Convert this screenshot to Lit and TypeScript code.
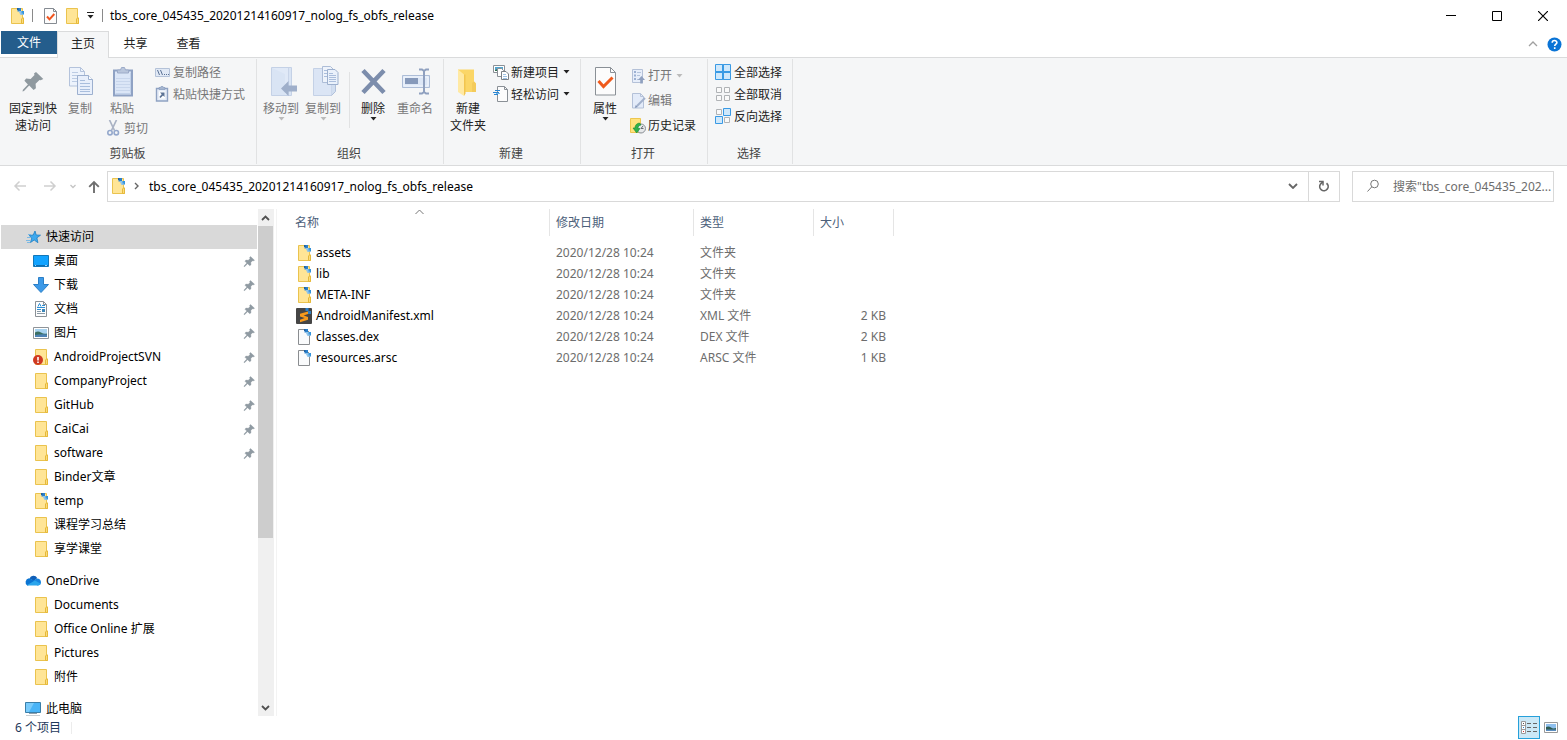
import { LitElement, html, svg, css, nothing } from "lit";
import { customElement, state } from "lit/decorators.js";
import { classMap } from "lit/directives/class-map.js";

const box = (w: number, h: number, body: unknown) =>
  html`<svg width=${w} height=${h} viewBox="0 0 ${w} ${h}" aria-hidden="true">${body}</svg>`;

/* ---------- shared shapes ---------- */
const folderShape = svg`
  <path d="M2.500 .5h11v9.500h1v5.500h-12z" fill="#ffe596" stroke="#eac34e"/>
  <path d="M12.500 15.500v-4.500l1-1h1v5.500z" fill="#fbdc7c" stroke="#e6b93a"/>`;
const zipMark = svg`
  <path d="M8.500 0h3.500v3.500h-3.500z" fill="#2a7fc9"/><path d="M12 3h3v3.500h-3z" fill="#2f8fd8"/>
  <path d="M9.500 3h3l2 3.500-3 .5z" fill="#8fc4ea"/><path d="M8 0h1.500v2h-1.500z" fill="#1f5f9f"/>
  <path d="M12.500 3.500h2v2h-2z" fill="#3d9ae0"/>`;
const pageShape = svg`<path d="M2.500 .5h8l3 3v12h-11z" fill="#fafbfc" stroke="#8a8d90"/>`;

/* ---------- 16px icons ---------- */
const icons = {
  folder: box(16, 16, folderShape),
  zipFolder: box(16, 16, svg`${folderShape}${zipMark}`),
  file: box(16, 16, svg`${pageShape}${zipMark}`),
  sublime: box(16, 16, svg`
    <rect width="16" height="16" rx="1" fill="#454545"/>
    <path d="M12 3.400v2.600L7.600 7.400 12 8.900v2.800L4 14.200v-2.500l4.700-1.600L4 8.500V5.800z" fill="#f79a1c"/>
    <path d="M9.500 0h3v3h-3z" fill="#2a7fc9"/><path d="M12 3h3v3h-3z" fill="#2f7fc0"/>`),
  checkPage: box(13, 16, svg`
    <path d="M.5 .5h9l3 3v12h-12z" fill="#fcfcfc" stroke="#858b92"/><path d="M9.500 .5v3h3" fill="none" stroke="#858b92"/>
    <path d="M3 8.500l2.500 2.800L10.300 6" fill="none" stroke="#f0541e" stroke-width="2"/>`),
  path: box(16, 16, svg`
    <path d="M.5 4.500h14v8H.5z" fill="#e1e9f5" stroke="#b4c2d8"/>
    <path d="M2.500 6l2 5M5.500 6l2 5" stroke="#5b7295" fill="none"/>
    <path d="M9 10.500h1M11 10.500h1M13 10.500h1" stroke="#5b7295" fill="none"/>`),
  shortcut: box(16, 16, svg`
    <path d="M1.500 2.500h11v12.500h-11z" fill="#e6edf8" stroke="#8fa2c2" stroke-width="1.400"/>
    <path d="M4 3.500V1.500h1.500L6 .5h2l.5 1H10v2z" fill="#a5b5cf" stroke="#8296b8" stroke-width=".6"/>
    <path d="M4 5.500h6v7H4z" fill="#fff"/>
    <path d="M5 6.500h4.500v4.500L8 9.500 5.500 12 4.300 11 6.700 8.200z" fill="#5b7295"/>`),
  cut: box(13, 16, svg`
    <path d="M2.500 0l5 10.500M9.500 0l-5 10.500" fill="none" stroke="#a9b2c4" stroke-width="1.700"/>
    <circle cx="3" cy="12.700" r="2.200" fill="none" stroke="#94a8cc" stroke-width="1.600"/>
    <circle cx="9.300" cy="12.700" r="2.200" fill="none" stroke="#94a8cc" stroke-width="1.600"/>`),
  newItem: box(16, 16, svg`
    <path d="M.5 1.500h11v7H.5z" fill="#fff" stroke="#8a9097"/><path d="M2 3h8v4H2z" fill="#53a5cf"/><path d="M2 6l4-1.500L10 7H2z" fill="#35704f"/>
    <path d="M4.500 4.500h4l2 2v6h-6z" fill="#fff" stroke="#8a9096"/>
    <path d="M8.500 7.500h4.500l2.500 2.500v5.500h-7z" fill="#fff" stroke="#7a8087"/>
    <path d="M10 10.500h3M10 12.500h4M10 14.500h4" stroke="#9fc3e6"/>`),
  easy: box(16, 16, svg`
    <path d="M4.500 .5h7l3 3v12h-10z" fill="#fcfcfc" stroke="#8a9096"/><path d="M11.500 .5v3h3" fill="none" stroke="#8a9096"/>
    <path d="M2 4.500h5M0 6.500h6M1 8.500h4" stroke="#2a86d1"/><path d="M3 7.500h4" stroke="#74b3e6"/>`),
  open: box(16, 16, svg`
    <path d="M2.500 1.500h10v13h-10z" fill="#e7eefa" stroke="#b4c1d8"/>
    <path d="M4 3h2v2H4zM4 6.500h2v2H4zM4 10h2v2H4z" fill="#9cb0d2"/><path d="M7 4.500h4M7 7.500h3M7 11.500h2" stroke="#b4c4dc"/>
    <path d="M11.500 8l3.500 4h-2.200v3.500h-2.600V12H8z" fill="#8fa0bf"/>`),
  edit: box(16, 16, svg`
    <path d="M2.500 .5h8l3 3v11.500h-11z" fill="#e3ebf9" stroke="#b4c1d8"/><path d="M10.500 .5v3h3" fill="none" stroke="#b4c1d8"/>
    <path d="M15 5L7 13" stroke="#a2b1cc" stroke-width="2"/><path d="M4.800 15l1-3 2 2z" fill="#8396b8"/>`),
  history: box(16, 16, svg`
    <path d="M.5 .5h10v14H.5z" fill="#ffe27d" stroke="#edc64f"/>
    <circle cx="11" cy="10.500" r="4.500" fill="#e6e8ea" stroke="#888e94"/>
    <path d="M11 10.500l2-2.500M11 10.500h2.500" fill="none" stroke="#666c72"/>
    <path d="M9.500 5C6 5.500 5 8 5 10H3l3.700 5L10 10.500H8C8 8.500 8.800 7.500 11 7z" fill="#31b14a" stroke="#178a32" stroke-width=".6"/>`),
  selectAll: box(16, 16, svg`<path d="M.5 .5h7v7h-7zM8.500 .5h7v7h-7zM.5 8.500h7v7h-7zM8.500 8.500h7v7h-7z" fill="#cfe8fb" stroke="#3a9ae4"/><path d="M0 8h16M8 0v16" stroke="#3a9ae4" stroke-width="1.500"/>`),
  selectNone: box(16, 16, svg`<path d="M1.500 1.500h5v5h-5zM9.500 1.500h5v5h-5zM1.500 9.500h5v5h-5zM9.500 9.500h5v5h-5z" fill="#fafafa" stroke="#b0b3b6"/>`),
  invert: box(16, 16, svg`
    <path d="M1.500 1.500h5v5h-5zM9.500 9.500h5v5h-5z" fill="#fafafa" stroke="#b0b3b6"/>
    <path d="M8.500 .5h7v7h-7zM.5 8.500h7v7h-7z" fill="#cfe8fb" stroke="#3a9ae4"/>`),
  star: box(16, 16, svg`
    <path d="M10 2l1.200 4 4.300.2-3.600 2.600 1 4.900-3.700-2.700-3.700 2.500 1.300-4.500L4.200 6.500l4-.5z" fill="#3ea9ee" stroke="#1d7fc4" stroke-width=".8"/>
    <path d="M3 5.500h3M2 8.500h4M1 11.500h4M2 13.500h3" stroke="#7bb9e4"/>`),
  desktop: box(16, 16, svg`
    <path d="M.5 2.500h15v11H.5z" fill="#12a3ff" stroke="#1377b8"/><path d="M1 12.500h14" stroke="#0d6db0"/><path d="M2 12.500h1M12 12.500h2" stroke="#9bd6ff"/>`),
  download: box(16, 16, svg`<path d="M5.500 .5h5v7h5L8 15.500.5 7.500h5z" fill="#3d9ae8" stroke="#2b7fc7"/>`),
  document: box(16, 16, svg`
    <path d="M2.500 .5h8l3 3v12h-11z" fill="#fdfdfd" stroke="#8a9096"/><path d="M10.500 .5v3h3" fill="none" stroke="#8a9096"/>
    <path d="M5 5.500l1.500-3 1.500 3" fill="none" stroke="#2c8fd6"/>
    <path d="M4 6.500h8M9 4.500h3M4 8.500h4" stroke="#2c8fd6"/><path d="M4 10.500h4M4 12.500h8" stroke="#8a9aa6"/><path d="M9 8h3v3H9z" fill="#3c86b8"/>`),
  picture: box(16, 16, svg`
    <path d="M.5 2.500h15v11H.5z" fill="#fff" stroke="#8f9499"/><path d="M2 4h12v8H2z" fill="#a8d3f0"/>
    <path d="M2 7.500q3-2 6 0t6 1V12H2z" fill="#3b6f62"/><path d="M2 10q6-1 12-.5V12H2z" fill="#4d82b5"/>`),
  svnFolder: box(16, 16, svg`${folderShape}
    <circle cx="5" cy="11" r="5" fill="#cf3a22"/><path d="M5 8v3.500M5 12.500v1.500" stroke="#fff" stroke-width="1.600"/>`),
  cloud: box(16, 16, svg`
    <path d="M4.500 5.500A4.300 4.300 0 0 1 12.200 5L9 8z" fill="#0f5fb8"/><path d="M4 5.300a4 4 0 0 0-1.500 7.400L11 8z" fill="#0b74d2"/>
    <path d="M12 5.600c2.300 0 4 1.500 4 3.600 0 2.100-1.600 3.300-3.500 3.300L7 9.500l3.300-3c.5-.5 1.100-.8 1.700-.9z" fill="#1683de"/>
    <path d="M3.500 12.500h9.200c1.500 0 2.500-.7 3-1.700L10 7.600l-7.800 4.300c.4.400.8.600 1.300.6z" fill="#2aa5ec"/>`),
  computer: box(16, 16, svg`
    <path d="M.5 1.500h15v10H.5z" fill="#49b4f7" stroke="#3a7ea8"/><path d="M1 2h8L4 11H1z" fill="#79cbfb"/>
    <path d="M7 12h2v1H7z" fill="#94a2ad"/><path d="M4 12.500h8" stroke="#8fa0ad"/><path d="M1 14.500h14" stroke="#c9ced2"/>`),
  pin: box(12, 13, svg`<path d="M7.500 1.500 11.500 5.300l-1.400.6-.6-.2-1.700 1.700.2 2.400-1.300.9-2.100-2L1.800 11.400l-.8.300.2-.9 2.600-2.700-1.800-1.800.9-1.200 2.400.2 1.700-1.700-.5-.8z" fill="#8f9aa2" stroke="#8f9aa2" stroke-width=".4"/>`),
  search: box(14, 14, svg`<circle cx="8.500" cy="5" r="3.800" fill="none" stroke="#777"/><path d="M5.800 7.800L1.500 12.500" stroke="#777"/>`),
};

/* ---------- large ribbon icons ---------- */
const large = {
  pin: box(32, 32, svg`<path d="M19 6l7.300 7-2.600 1.200-1.200-.3-3.900 3.900.3 4.400-2.300 1.700-4.400-4.500-5.200 5.600-1.500.5.400-1.700 5-5.300-3.500-3.800 1.700-2.200 4.500.4 3.900-3.900-.5-1.500z" fill="#8f999f"/>`),
  copy: box(32, 32, svg`
    <path d="M5.500 1.500h11l4 4v14.500h-15z" fill="#edf3fc" stroke="#b4c3dc"/><path d="M16.500 1.500v4h4" fill="none" stroke="#b4c3dc"/>
    <path d="M8 6.500h6M8 9.500h10M8 12.500h10M8 15.500h10" stroke="#bccce4"/>
    <path d="M13.500 9.500h11l4 4v15h-15z" fill="#e8effb" stroke="#9db0cf"/><path d="M24.500 9.500v4h4" fill="#fff" stroke="#9db0cf"/>
    <path d="M16 14.500h5M16 17.500h10M16 20.500h10M16 23.500h10M16 25.500h10" stroke="#a9bedd"/>`),
  paste: box(32, 32, svg`
    <path d="M8 4.500h18v25H8z" fill="#dbe6f7" stroke="#8fa2c4" stroke-width="2"/><path d="M9.500 27.500h15v-21" fill="none" stroke="#c2d2ea"/>
    <path d="M11.500 7V4h3l1-2.500h3l1 2.500h3v3z" fill="#b9c6dc" stroke="#9cabc8"/>
    <path d="M10 12.500h14M10 15.500h14M10 18.500h14M10 21.500h14M10 24.500h14" stroke="#c8d6ec"/>`),
  moveTo: box(32, 32, svg`
    <path d="M6.500 1.500h20v28h-20z" fill="#d9e4f4" stroke="#c4d1e6"/><path d="M7 2h17v23l-4 4V8z" fill="#e0e9f7"/><path d="M23.500 2v27" stroke="#c8d4e8"/>
    <path d="M16 22.500l7.500-7.500v4.500H32v6h-8.500V30z" fill="#9fafca"/>`),
  copyTo: box(32, 32, svg`
    <path d="M6.500 2.500h18v27h-18z" fill="#dbe5f5" stroke="#c4d1e6"/><path d="M24.500 17.500h4v8l-4 4" fill="#d1def0" stroke="#b1c0da"/>
    <path d="M15.500 .5h8l3 3v13h-11z" fill="#eef3fb" stroke="#adbdd7"/>
    <path d="M20.500 3.500h7.500l3 3v12h-10.500z" fill="#eaf1fb" stroke="#9db0ce"/>
    <path d="M17 4.500h3M17 7.500h3M17 10.500h3M22 7.500h4M22 9.500h7M22 11.500h7M22 13.500h7M22 15.500h7" stroke="#abbedc"/>`),
  remove: box(32, 32, svg`<path d="M6 4.500l21 22M27 4.500l-21 22" fill="none" stroke="#7c8dac" stroke-width="4.600"/>`),
  rename: box(32, 32, svg`
    <path d="M3.500 9.500h27v12h-27z" fill="#dde7f6" stroke="#adbdd7" /><path d="M5 11h24v9H5z" fill="none" stroke="#f3f7fd"/>
    <path d="M6 12h13v6H6z" fill="#8699ba"/>
    <path d="M20 3.500h3l2 1.500v21l-2 1.500h-3M30 3.500h-3l-2 1.500M30 27.500h-3l-2-1.500" fill="none" stroke="#8fa0bf" stroke-width="2"/>`),
  newFolder: box(32, 32, svg`
    <path d="M6 3.500h16v12l2 2V26H6z" fill="#fbd667"/><path d="M6 3.500l6 5v21.500l-6-4z" fill="#ffe9a3"/>
    <path d="M12 8.500h1.500v19L12 30z" fill="#f2c550"/><path d="M20 17l2-1.500 2 2V26h-4z" fill="#f4cb5b"/>`),
  properties: box(32, 32, svg`
    <path d="M6.500 1.500h15l5 5v22.500h-20z" fill="#fcfcfc" stroke="#8a9096"/><path d="M21.500 1.500v5h5" fill="none" stroke="#8a9096"/>
    <path d="M9.500 15l5 5.500L23.500 11.500" fill="none" stroke="#ef5a1c" stroke-width="3"/>`),
};

const down = html`<svg class="caret" width="7" height="4" viewBox="0 0 7 4" aria-hidden="true"><path d="M0.500 0h6L3.500 3.500z" fill="currentColor"/></svg>`;

type Icon = keyof typeof icons;
interface NavItem { label: string; icon: Icon; pinned?: boolean; }
interface NavGroup { label: string; icon: Icon; items: NavItem[]; }

const NAV: NavGroup[] = [
  { label: "快速访问", icon: "star", items: [
    { label: "桌面", icon: "desktop", pinned: true },
    { label: "下载", icon: "download", pinned: true },
    { label: "文档", icon: "document", pinned: true },
    { label: "图片", icon: "picture", pinned: true },
    { label: "AndroidProjectSVN", icon: "svnFolder", pinned: true },
    { label: "CompanyProject", icon: "folder", pinned: true },
    { label: "GitHub", icon: "folder", pinned: true },
    { label: "CaiCai", icon: "folder", pinned: true },
    { label: "software", icon: "folder", pinned: true },
    { label: "Binder文章", icon: "folder" },
    { label: "temp", icon: "zipFolder" },
    { label: "课程学习总结", icon: "folder" },
    { label: "享学课堂", icon: "folder" },
  ] },
  { label: "OneDrive", icon: "cloud", items: [
    { label: "Documents", icon: "folder" },
    { label: "Office Online 扩展", icon: "folder" },
    { label: "Pictures", icon: "folder" },
    { label: "附件", icon: "folder" },
  ] },
  { label: "此电脑", icon: "computer", items: [] },
];

const FILES: { name: string; icon: Icon; type: string; size: string }[] = [
  { name: "assets", icon: "zipFolder", type: "文件夹", size: "" },
  { name: "lib", icon: "zipFolder", type: "文件夹", size: "" },
  { name: "META-INF", icon: "zipFolder", type: "文件夹", size: "" },
  { name: "AndroidManifest.xml", icon: "sublime", type: "XML 文件", size: "2 KB" },
  { name: "classes.dex", icon: "file", type: "DEX 文件", size: "2 KB" },
  { name: "resources.arsc", icon: "file", type: "ARSC 文件", size: "1 KB" },
];

const TITLE = "tbs_core_045435_20201214160917_nolog_fs_obfs_release";

@customElement("app-root")
export class AppRoot extends LitElement {
  @state() private selected = "快速访问";

  static styles = css`
    :host {
      display: flex; flex-direction: column; height: 100vh; overflow: hidden;
      background: #fff; color: #000;
      font: 12px/17px "Noto Sans", "Noto Sans CJK SC", sans-serif;
    }
    * { box-sizing: border-box; }
    button, input { font: inherit; color: inherit; border: 0; background: none; padding: 0; margin: 0; }
    svg { display: block; flex: none; }
    button { white-space: nowrap; }

    .titlebar { display: flex; align-items: center; height: 31px; padding: 0 1px 0 9px; flex: none; }
    .titlebar .sep { width: 1px; height: 13px; background: #8a8a8a; }
    .quick { display: flex; align-items: center; }
    .quick .check { margin: 0 7px 0 11px; }
    .quick .caret-btn { margin: 0 8px 0 7px; }
    .quick .sep.first { margin-left: 7px; }
    .title { margin-left: 7px; flex: 1; }
    .win { width: 46px; height: 31px; display: grid; place-items: center; }

    .tabs { display: flex; height: 27px; padding-left: 1px; flex: none; border-bottom: 1px solid #dadbdc; }
    .tab { width: 53px; height: 24px; text-align: center; color: #222; }
    .tab.file { width: 56px; height: 23px; background: #245d8c; color: #fff; }
    .tab.active { width: 52px; height: 27px; padding-bottom: 4px; background: #f5f6f7; border: 1px solid #dadbdc; border-bottom: 0; }
    .tools { margin-left: auto; display: flex; align-items: center; gap: 9px; padding-right: 5px; }

    .ribbon { display: flex; flex: none; height: 108px; padding-left: 1px; background: #f5f6f7; border-bottom: 1px solid #dadbdc; color: #222; }
    .group { display: flex; flex-direction: column; padding: 0 3px; border-right: 1px solid #e1e2e3; margin: 1px 0; }
    .group .body { display: flex; flex: 1; }
    .group .name { padding-right: 2px; text-align: center; color: #444; line-height: 20px; }
    .clip { width: 256px; } .org { width: 187px; } .new { width: 137px; } .opn { width: 127px; } .sel { width: 85px; }
    .big { display: flex; flex-direction: column; align-items: center; align-self: flex-start; width: 42px; padding-top: 7px; }
    .big.wide { width: 48px; margin: 0 2px 0 5px; }
    .big .label { margin-top: 2px; }
    .dim { color: #777; }
    .dim .caret { color: #bbb; }
    .stack { display: flex; flex-direction: column; align-items: flex-start; padding: 2px 0 0 4px; }
    .small { display: flex; align-items: center; gap: 2px; height: 22px; }
    .small .caret { margin-left: 2px; }
    .clip .stack { padding-left: 7px; }
    .opn .stack { padding-top: 4px; }
    .opn .small { height: 25px; }
    .sel .small { gap: 3px; }
    .paste .small { gap: 4px; padding-left: 6px; }
    .vsep { width: 1px; height: 56px; margin: 13px 2px 0 5px; background: #e1e2e3; }

    .address { display: flex; align-items: center; height: 42px; padding: 0 13px 2px; flex: none; }
    .address .nav { display: flex; align-items: center; width: 94px; }
    .address .nav button + button { margin-left: 16px; }
    .address .nav button + .recent { margin-left: 13px; }
    .address .nav .recent + button { margin-left: 12px; }
    .crumbs { display: flex; flex: 1; height: 31px; border: 1px solid #d9d9d9; align-items: center; }
    .crumbs .crumb-icon { padding: 0 8px 0 2px; }
    .crumbs .crumb { margin-left: 10px; flex: 1; text-align: left; }
    .crumbs .drop { width: 30px; height: 29px; display: grid; place-items: center; }
    .crumbs .refresh { width: 31px; height: 29px; display: grid; place-items: center; border-left: 1px solid #d9d9d9; }
    .search { display: flex; align-items: center; width: 202px; height: 31px; margin-left: 12px; padding-left: 13px; border: 1px solid #d9d9d9; color: #6d6d6d; }
    .search input { flex: 1; min-width: 0; margin-left: 13px; outline: 0; }
    .search input::placeholder { color: #6d6d6d; opacity: 1; }

    .main { display: flex; flex: 1; min-height: 0; padding-top: 1px; }
    .tree { width: 257px; padding: 16px 0 0 1px; overflow: hidden; flex: none; }
    .tree ul { list-style: none; margin: 0; padding: 0; }
    .branch { margin-bottom: 8px; }
    .row { display: flex; align-items: center; width: 100%; height: 24px; padding: 0 2px 0 24px; text-align: left; }
    .row.child { padding-left: 32px; }
    .row.on { background: #d9d9d9; }
    .row .text { margin-left: 5px; padding-bottom: 2px; flex: 1; }
    .bar { display: flex; flex-direction: column; width: 16px; margin-left: 1px; background: #f0f0f0; flex: none; }
    .bar button { width: 15px; height: 17px; display: grid; place-items: center; }
    .thumb { height: 66%; width: 15px; background: #cdcdcd; }
    .bar .rest { flex: 1; }
    .pane { flex: 1; margin-left: 2px; border-left: 1px solid #f3f3f3; min-width: 0; }

    table { border-collapse: collapse; table-layout: fixed; width: 617px; }
    .c-name { width: 273px; } .c-date { width: 144px; } .c-type { width: 120px; } .c-size { width: 80px; }
    th { position: relative; padding: 0 0 6px; font-weight: 400; text-align: left; color: #4c607a; }
    th .cell { height: 27px; padding-left: 6px; line-height: 27px; border-right: 1px solid #e5e5e5; }
    th:first-child .cell { padding-left: 18px; }
    th svg { position: absolute; top: 0; left: 138px; }
    td { height: 21px; padding: 0 8px 0 6px; color: #6d6d6d; white-space: nowrap; }
    td:first-child { padding-left: 19px; color: #000; }
    td:last-child { text-align: right; }
    .entry { display: flex; align-items: center; gap: 4px; }

    .status { display: flex; align-items: center; height: 24px; padding: 0 5px 0 15px; flex: none; color: #1e395b; }
    .status .count { padding-right: 10px; border-right: 1px solid #ececec; line-height: 12px; }
    .views { display: flex; align-self: flex-start; margin-left: auto; }
    .views button { width: 22px; height: 23px; display: grid; place-items: center; }
    .views .on { border: 1px solid #26a0da; background: #cbe8f6; }
  `;

  private small(label: string, icon: Icon, dim = false, caret = false) {
    return html`<button class=${classMap({ small: true, dim })}>
      ${icons[icon]}<span>${label}</span>${caret ? down : nothing}
    </button>`;
  }

  private big(lines: string[], icon: keyof typeof large, o: { dim?: boolean; caret?: boolean; wide?: boolean } = {}) {
    return html`<button class=${classMap({ big: true, dim: !!o.dim, wide: !!o.wide })}>
      ${large[icon]}<span class="label">${lines[0]}</span>
      ${lines[1] ? html`<span>${lines[1]}</span>` : nothing}${o.caret ? down : nothing}
    </button>`;
  }

  private row(item: NavItem, child: boolean) {
    return html`<button class=${classMap({ row: true, child, on: this.selected === item.label })}
      @click=${() => (this.selected = item.label)}>
      ${icons[item.icon]}<span class="text">${item.label}</span>${item.pinned ? icons.pin : nothing}
    </button>`;
  }

  render() {
    return html`
      <header class="titlebar">
        <div class="quick">
          ${icons.zipFolder}<span class="sep first"></span>
          <button class="check" aria-label="属性">${icons.checkPage}</button>
          <button aria-label="新建文件夹">${icons.folder}</button>
          <button class="caret-btn" aria-label="自定义快速访问工具栏">
            ${box(7, 7, svg`<path d="M0 .5h7" stroke="#222"/><path d="M.5 3h6L3.500 6.500z" fill="#222"/>`)}
          </button>
          <span class="sep"></span>
        </div>
        <span class="title">${TITLE}</span>
        <button class="win" aria-label="最小化">${box(10, 10, svg`<path d="M0 4.500h10" stroke="#000"/>`)}</button>
        <button class="win" aria-label="最大化">${box(10, 10, svg`<path d="M.5 .5h9v9h-9z" fill="none" stroke="#000"/>`)}</button>
        <button class="win" aria-label="关闭">${box(10, 10, svg`<path d="M0 0l10 10M10 0L0 10" stroke="#000" stroke-width="1.200"/>`)}</button>
      </header>

      <nav class="tabs">
        <button class="tab file">文件</button>
        <button class="tab active">主页</button>
        <button class="tab">共享</button>
        <button class="tab">查看</button>
        <div class="tools">
          <button aria-label="最小化功能区">${box(10, 6, svg`<path d="M1 5l4-4 4 4" fill="none" stroke="#a0a0a0" stroke-width="1.300"/>`)}</button>
          <button aria-label="帮助">${box(15, 15, svg`<circle cx="7.500" cy="7.500" r="7" fill="#0a74d6"/>
            <path d="M5.200 5.800c0-3 4.700-2.900 4.700-.2 0 1.600-2.200 1.700-2.200 3.500M7.700 10.300v1.800" fill="none" stroke="#fff" stroke-width="1.600"/>`)}</button>
        </div>
      </nav>

      <section class="ribbon">
        <div class="group clip">
          <div class="body">
            ${this.big(["固定到快", "速访问"], "pin", { wide: true })}
            ${this.big(["复制"], "copy", { dim: true })}
            <div class="paste">
              ${this.big(["粘贴"], "paste", { dim: true })}
              ${this.small("剪切", "cut", true)}
            </div>
            <div class="stack">
              ${this.small("复制路径", "path", true)}
              ${this.small("粘贴快捷方式", "shortcut", true)}
            </div>
          </div>
          <div class="name">剪贴板</div>
        </div>
        <div class="group org">
          <div class="body">
            ${this.big(["移动到"], "moveTo", { dim: true, caret: true })}
            ${this.big(["复制到"], "copyTo", { dim: true, caret: true })}
            <span class="vsep"></span>
            ${this.big(["删除"], "remove", { caret: true })}
            ${this.big(["重命名"], "rename", { dim: true })}
          </div>
          <div class="name">组织</div>
        </div>
        <div class="group new">
          <div class="body">
            ${this.big(["新建", "文件夹"], "newFolder")}
            <div class="stack">
              ${this.small("新建项目", "newItem", false, true)}
              ${this.small("轻松访问", "easy", false, true)}
            </div>
          </div>
          <div class="name">新建</div>
        </div>
        <div class="group opn">
          <div class="body">
            ${this.big(["属性"], "properties", { caret: true })}
            <div class="stack">
              ${this.small("打开", "open", true, true)}
              ${this.small("编辑", "edit", true)}
              ${this.small("历史记录", "history")}
            </div>
          </div>
          <div class="name">打开</div>
        </div>
        <div class="group sel">
          <div class="body">
            <div class="stack">
              ${this.small("全部选择", "selectAll")}
              ${this.small("全部取消", "selectNone")}
              ${this.small("反向选择", "invert")}
            </div>
          </div>
          <div class="name">选择</div>
        </div>
      </section>

      <div class="address">
        <div class="nav">
          <button aria-label="后退">${box(14, 12, svg`<path d="M13 6H2M6.500 1.500L2 6l4.500 4.500" fill="none" stroke="#cfcfcf" stroke-width="1.500"/>`)}</button>
          <button aria-label="前进">${box(14, 12, svg`<path d="M1 6h11M7.500 1.500L12 6l-4.500 4.500" fill="none" stroke="#cfcfcf" stroke-width="1.500"/>`)}</button>
          <button class="recent" aria-label="最近浏览的位置">${box(6, 5, svg`<path d="M.5 1L3 3.500 5.500 1" fill="none" stroke="#c4c4c4" stroke-width="1.300"/>`)}</button>
          <button aria-label="上移">${box(12, 13, svg`<path d="M6 13V2M1.200 6.800L6 2l4.800 4.800" fill="none" stroke="#6f6f6f" stroke-width="1.900"/>`)}</button>
        </div>
        <div class="crumbs">
          <span class="crumb-icon">${icons.zipFolder}</span>
          ${box(5, 8, svg`<path d="M1 1l3 3-3 3" fill="none" stroke="#666" stroke-width="1.400"/>`)}
          <button class="crumb">${TITLE}</button>
          <button class="drop" aria-label="以前的位置">${box(10, 6, svg`<path d="M1 1l4 4 4-4" fill="none" stroke="#666" stroke-width="1.800"/>`)}</button>
          <button class="refresh" aria-label="刷新">${box(12, 12, svg`<path d="M1 1.500h4v4" fill="none" stroke="#666" stroke-width="1.500"/><path d="M8.500 3.200A4.200 4.200 0 1 1 2.600 4L4.800 1.800" fill="none" stroke="#666" stroke-width="1.700"/>`)}</button>
        </div>
        <label class="search">
          ${icons.search}
          <input type="text" aria-label="搜索" placeholder='搜索"tbs_core_045435_202...' />
        </label>
      </div>

      <div class="main">
        <nav class="tree">
          ${NAV.map((g) => html`<div class="branch">
            ${this.row(g, false)}
            <ul>${g.items.map((i) => html`<li>${this.row(i, true)}</li>`)}</ul>
          </div>`)}
        </nav>
        <div class="bar">
          <button aria-label="向上滚动">${box(9, 6, svg`<path d="M1 5l3.500-3.500L8 5" fill="none" stroke="#505050" stroke-width="1.800"/>`)}</button>
          <div class="rest"><div class="thumb"></div></div>
          <button aria-label="向下滚动">${box(9, 6, svg`<path d="M1 1l3.500 3.500L8 1" fill="none" stroke="#505050" stroke-width="1.800"/>`)}</button>
        </div>
        <section class="pane">
          <table>
            <colgroup><col class="c-name" /><col class="c-date" /><col class="c-type" /><col class="c-size" /></colgroup>
            <thead>
              <tr>
                <th><div class="cell">名称</div>${box(9, 6, svg`<path d="M.5 5l4-4 4 4" fill="none" stroke="#777"/>`)}</th>
                <th><div class="cell">修改日期</div></th>
                <th><div class="cell">类型</div></th>
                <th><div class="cell">大小</div></th>
              </tr>
            </thead>
            <tbody>
              ${FILES.map((f) => html`<tr>
                <td><div class="entry">${icons[f.icon]}<span>${f.name}</span></div></td>
                <td>2020/12/28 10:24</td>
                <td>${f.type}</td>
                <td>${f.size}</td>
              </tr>`)}
            </tbody>
          </table>
        </section>
      </div>

      <footer class="status">
        <span class="count">6 个项目</span>
        <div class="views">
          <button class="on" aria-label="详细信息">${box(16, 13, svg`
            <path d="M.5 .5h4v12h-4zM.5 4.500h4M.5 8.500h4" fill="#fff" stroke="#9a9a9a"/>
            <path d="M2 2.500h1" stroke="#555"/><path d="M2 6.500h1" stroke="#2a86d1"/><path d="M2 10.500h1" stroke="#d13438"/>
            <path d="M6 2.500h4M12 2.500h4M6 6.500h4M12 6.500h4M6 10.500h4M12 10.500h4" stroke="#666"/>`)}</button>
          <button aria-label="大图标">${box(14, 11, svg`
            <path d="M.5 .5h13v10H.5z" fill="#fff" stroke="#999"/><path d="M2 2h10v7H2z" fill="#8fc0ee"/>
            <path d="M2 5q3-1 5 .5t5 .5v3H2z" fill="#2f5d52"/><path d="M2 7.500h10V9H2z" fill="#5b8dc0"/>`)}</button>
        </div>
      </footer>
    `;
  }
}
